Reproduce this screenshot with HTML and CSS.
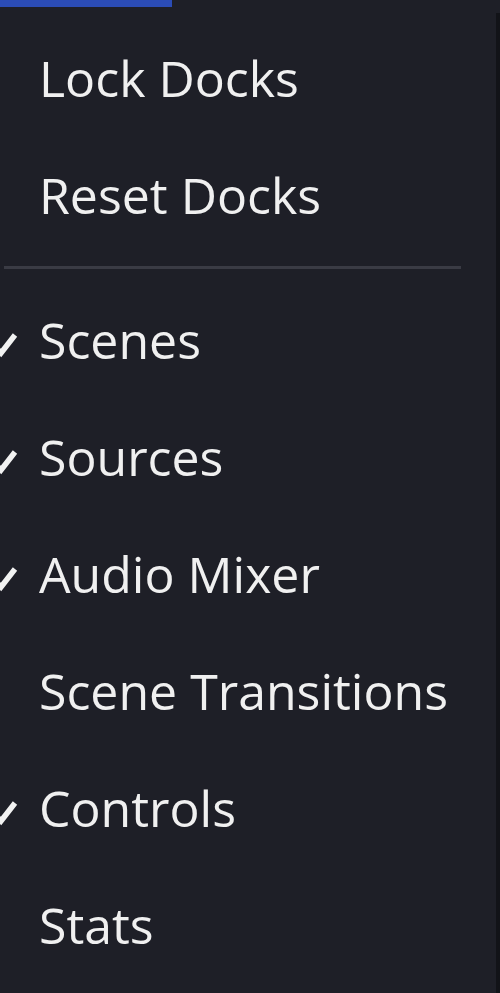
FILE: index.html
```html
<!DOCTYPE html>
<html>
<head>
<meta charset="utf-8">
<link rel="stylesheet" href="styles.css">
</head>
<body>
<div class="frame">
  <div class="panel">
    <div class="tab"></div>
    <div class="menu">
      <div class="group first">
        <div class="item"><span class="mark"></span><span class="label">Lock Docks</span></div>
        <div class="item"><span class="mark"></span><span class="label">Reset Docks</span></div>
      </div>
      <div class="sep"></div>
      <div class="group">
        <div class="item"><span class="mark"><svg viewBox="0 0 39 117" width="39" height="117"><polyline points="-8,62 1,71 15,53" class="chk"/></svg></span><span class="label">Scenes</span></div>
        <div class="item"><span class="mark"><svg viewBox="0 0 39 117" width="39" height="117"><polyline points="-8,62 1,71 15,53" class="chk"/></svg></span><span class="label">Sources</span></div>
        <div class="item"><span class="mark"><svg viewBox="0 0 39 117" width="39" height="117"><polyline points="-8,62 1,71 15,53" class="chk"/></svg></span><span class="label">Audio Mixer</span></div>
        <div class="item"><span class="mark"></span><span class="label">Scene Transitions</span></div>
        <div class="item"><span class="mark"><svg viewBox="0 0 39 117" width="39" height="117"><polyline points="-8,62 1,71 15,53" class="chk"/></svg></span><span class="label">Controls</span></div>
        <div class="item"><span class="mark"></span><span class="label">Stats</span></div>
      </div>
    </div>
  </div>
  <div class="edge"></div>
</div>
</body>
</html>
```

FILE: styles.css
```css
html, body {
  margin: 0;
  padding: 0;
  background: #1e1f27;
  height: 100%;
  overflow: hidden;
}
.frame {
  display: flex;
  width: 500px;
  height: 993px;
}
.panel {
  flex: 1;
  display: flex;
  flex-direction: column;
}
.edge {
  width: 4px;
  margin-top: 13px;
  background: #121318;
}
.tab {
  width: 172px;
  height: 7px;
  background: #2b4cb6;
}
.menu {
  display: flex;
  flex-direction: column;
}
.group.first {
  margin-top: 13px;
}
.item {
  display: flex;
  height: 117px;
  align-items: stretch;
}
.mark {
  width: 39px;
  flex: none;
  display: block;
}
.mark svg {
  display: block;
}
.chk {
  fill: none;
  stroke: #f2f2f2;
  stroke-width: 5.5;
}
.label {
  font-family: "Open Sans", "DejaVu Sans", sans-serif;
  font-size: 50px;
  line-height: 117px;
  color: #f0f0f0;
  white-space: nowrap;
}
.sep {
  margin: 12px 35px 13px 4px;
  height: 3px;
  background: #3a3b44;
}
```
